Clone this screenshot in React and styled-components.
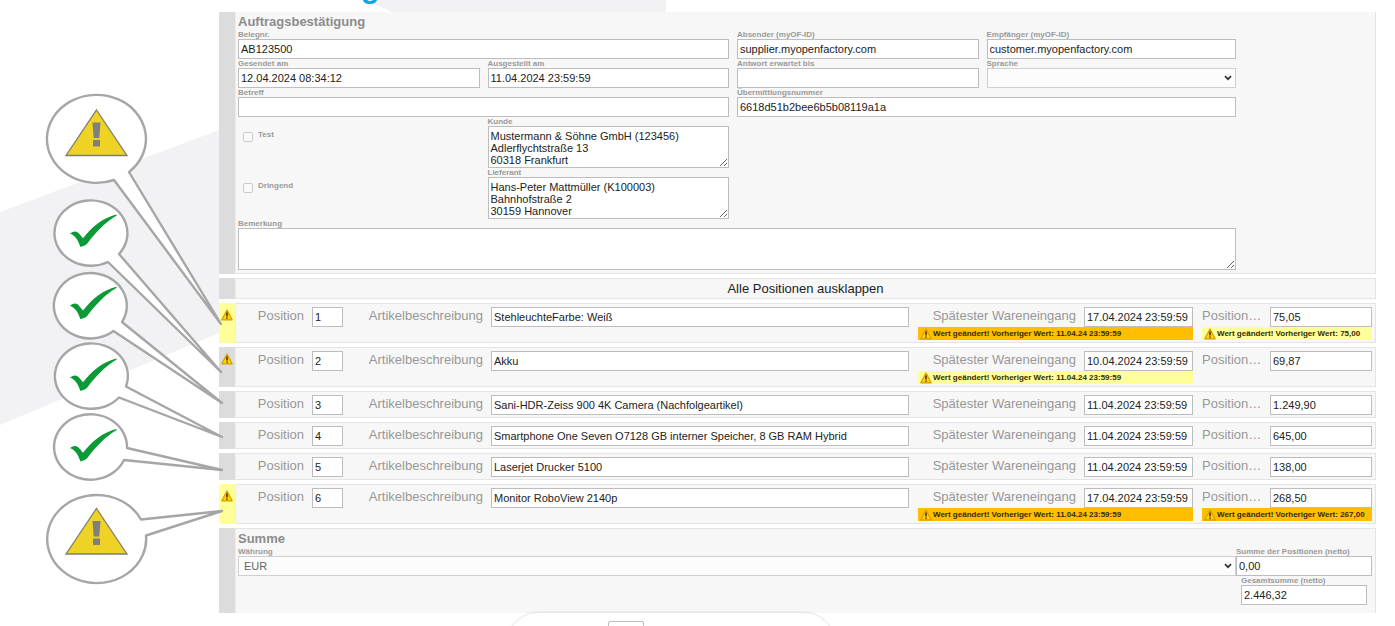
import React, { useId } from 'react'
import styled, { createGlobalStyle } from 'styled-components'

const GlobalStyle = createGlobalStyle`
	body {
		margin: 0;
		background: #fff;
		font-family: 'Liberation Sans', Arial, sans-serif;
	}

	* {
		box-sizing: border-box;
	}
`

const Page = styled.div`
	position: relative;
	z-index: 0;
	height: 100vh;
	overflow: hidden;
`

const Backdrop = styled.svg`
	position: absolute;
	top: 0;
	left: 0;
	z-index: -1;
`

const Callouts = styled.svg`
	position: absolute;
	top: 0;
	left: 0;
	pointer-events: none;
`

const Header = styled.header`
	display: flex;
	align-items: flex-end;
	height: 12px;
	padding-left: 361px;
	overflow: hidden;
`

const Brand = styled.div`
	font-size: 30px;
	line-height: 28px;
	font-weight: bold;
	color: #0ea5e0;
	padding-bottom: 10px;
`

const Document = styled.main`
	display: flex;
	flex-direction: column;
	gap: 4px;
	margin: 0 19px 0 219px;
	background: #fff;
`

const Section = styled.section`
	display: flex;
`

const Strip = styled.div`
	flex: none;
	width: 17px;
	padding: 6px 0 0 2px;
	line-height: 0;
	background: ${props => props.$changed ? '#ffff99' : '#dcdcdc'};
	border-right: 1px solid #ececec;
`

const Body = styled.div`
	flex: 1;
	min-width: 0;
	background: #f7f7f7;
	border: 1px solid #e4e4e4;
	border-left: 0;
`

const HeadBody = styled(Body)`
	border-top: 0;
	padding: 0 139px 3px 2px;
`

const SumBody = styled(Body)`
	border-bottom: 0;
	padding: 0 3px 8px 2px;
`

const Title = styled.h2`
	margin: 0;
	padding-top: 2px;
	font-size: 13px;
	line-height: 16px;
	color: #8c8c8c;
`

const Grid = styled.div`
	display: grid;
	grid-template-columns: repeat(4, 1fr);
`

const SumGrid = styled.div`
	display: grid;
	grid-template-columns: 1fr 136px;
`

const Cell = styled.div`
	display: flex;
	flex-direction: column;
	grid-column: ${props => props.$start || 'auto'} / span ${props => props.$span || 1};
	padding-right: ${props => props.$last ? 0 : 8}px;
`

const TotalCell = styled(Cell)`
	padding: 0 5px;
`

const SmallLabel = styled.label`
	font-size: 8px;
	line-height: 9px;
	font-weight: bold;
	color: #9a9a9a;
	white-space: nowrap;
`

const Input = styled.input`
	display: block;
	width: 100%;
	height: 20px;
	padding: 0 2px;
	border: 1px solid #bdbdbd;
	border-radius: 0;
	background: #fff;
	color: #222;
	font-family: inherit;
	font-size: 11px;
	outline: none;
`

const Area = styled.textarea`
	display: block;
	width: 100%;
	height: 42px;
	padding: 3px 2px 0;
	border: 1px solid #bdbdbd;
	background: #fff;
	color: #222;
	font-family: inherit;
	font-size: 11px;
	line-height: 12px;
	overflow: hidden;
	outline: none;
`

const SelectBox = styled.div`
	display: grid;
	align-items: center;

	> * {
		grid-area: 1 / 1;
	}

	> svg {
		justify-self: end;
		margin-right: 4px;
		pointer-events: none;
	}
`

const Select = styled.select`
	appearance: none;
	width: 100%;
	height: 20px;
	padding: 0 5px;
	border: 1px solid #cfcfcf;
	border-radius: 0;
	background: #fcfcfc;
	color: #666;
	font-family: inherit;
	font-size: 11px;
`

const CheckCell = styled.div`
	display: flex;
	align-items: flex-start;
	gap: 5px;
	padding: 13px 0 0 5px;
`

const Checkbox = styled.input`
	appearance: none;
	width: 10px;
	height: 10px;
	margin: 2px 0 0;
	border: 1px solid #ccc;
	border-radius: 2px;
	background: #fafafa;
`

const ExpandButton = styled.button`
	display: block;
	width: 100%;
	height: 19px;
	padding: 0;
	border: 0;
	background: none;
	color: #222;
	font-family: inherit;
	font-size: 13px;
	line-height: 19px;
`

const PositionBody = styled(Body)`
	display: grid;
	grid-template-columns: 105px 1fr 275px 170px;
	column-gap: 9px;
	padding: 3px 3px 2px 2px;
`

const Line = styled.div`
	display: flex;
	gap: 8px;
`

const LineLabel = styled.label`
	flex: ${props => props.$width ? 'none' : 1};
	width: ${props => props.$width ? props.$width + 'px' : 'auto'};
	font-size: 13px;
	line-height: 18px;
	text-align: ${props => props.$left ? 'left' : 'right'};
	white-space: nowrap;
	color: #979797;
`

const LineInput = styled(Input)`
	flex: ${props => props.$width ? 'none' : 1};
	width: ${props => props.$width ? props.$width + 'px' : 'auto'};
	min-width: 0;
`

const Notice = styled.div`
	display: flex;
	align-items: center;
	gap: 1px;
	height: 13px;
	padding-left: 2px;
	background: ${props => props.$level === 'high' ? '#ffbf00' : '#ffff99'};
	color: #332b00;
	font-size: 8px;
	font-weight: bold;
	white-space: nowrap;
`

const Footer = styled.footer`
	display: flex;
	justify-content: center;
	padding-right: 54px;
`

const Pager = styled.div`
	width: 326px;
	height: 60px;
	padding: 8px 0 0 100px;
	border-radius: 30px;
	background: #fff;
	box-shadow: 0 0 3px rgba(0, 0, 0, 0.2);
`

const PagerInput = styled(Input)`
	width: 36px;
	height: 24px;
	border-radius: 2px;
`

const positions = [
	{ nr: 1, text: 'StehleuchteFarbe: Weiß', date: '17.04.2024 23:59:59', price: '75,05', warn: true, changed: true, dateNote: { level: 'high', old: '11.04.24 23:59:59' }, priceNote: { level: 'low', old: '75,00' } },
	{ nr: 2, text: 'Akku', date: '10.04.2024 23:59:59', price: '69,87', warn: true, dateNote: { level: 'low', old: '11.04.24 23:59:59' } },
	{ nr: 3, text: 'Sani-HDR-Zeiss 900 4K Camera (Nachfolgeartikel)', date: '11.04.2024 23:59:59', price: '1.249,90' },
	{ nr: 4, text: 'Smartphone One Seven O7128 GB interner Speicher, 8 GB RAM Hybrid', date: '11.04.2024 23:59:59', price: '645,00' },
	{ nr: 5, text: 'Laserjet Drucker 5100', date: '11.04.2024 23:59:59', price: '138,00' },
	{ nr: 6, text: 'Monitor RoboView 2140p', date: '17.04.2024 23:59:59', price: '268,50', warn: true, changed: true, dateNote: { level: 'high', old: '11.04.24 23:59:59' }, priceNote: { level: 'high', old: '267,00' } },
]

const bubbles = [
	{ type: 'warn', y: 139, d: 'M114 180 A49.5 44 0 1 1 129 172 L221 324 Z' },
	{ type: 'ok', y: 233.5, d: 'M108 262 A36.5 32.7 0 1 1 119 254 L221 372 Z' },
	{ type: 'ok', y: 305.7, d: 'M113.5 331 A36.5 32.7 0 1 1 122 322 L222 403 Z' },
	{ type: 'ok', y: 377.5, d: 'M119 397.5 A36.5 32.7 0 1 1 126 386.5 L222 437 Z' },
	{ type: 'ok', y: 448, d: 'M124 460 A36.5 32.7 0 1 1 127 448 L222 470 Z' },
	{ type: 'warn', y: 537.5, d: 'M146 535.5 A49.5 44 0 1 1 141 519.5 L222 511 Z' },
]

const WarnIcon = () => (
	<svg width="12" height="12" viewBox="0 0 12 12">
		<path d="M6 1 L11.2 10.8 H0.8 Z" fill="#ffd800" stroke="#d99a00" strokeWidth="1.2" strokeLinejoin="round" />
		<path d="M6 3.6 V7.6 M6 8.4 V9.8" stroke="#5a2800" strokeWidth="1.6" />
	</svg>
)

const Chevron = () => (
	<svg width="8" height="6" viewBox="0 0 8 6">
		<path d="M1 1.2 L4 4.2 L7 1.2" fill="none" stroke="#333" strokeWidth="1.7" />
	</svg>
)

const Field = ({ label, value, area, select, cell: CellType = Cell, ...cell }) => {
	const id = useId()
	return (
		<CellType {...cell}>
			<SmallLabel htmlFor={id}>{label}</SmallLabel>
			{area && <Area id={id} defaultValue={value} />}
			{select && (
				<SelectBox>
					<Select id={id} defaultValue={value}>
						<option value={value}>{value}</option>
					</Select>
					<Chevron />
				</SelectBox>
			)}
			{!area && !select && <Input id={id} defaultValue={value} />}
		</CellType>
	)
}

const Check = ({ label }) => {
	const id = useId()
	return (
		<CheckCell>
			<Checkbox id={id} type="checkbox" />
			<SmallLabel htmlFor={id}>{label}</SmallLabel>
		</CheckCell>
	)
}

const LineField = ({ label, value, labelWidth, inputWidth, left, note }) => {
	const id = useId()
	return (
		<div>
			<Line>
				<LineLabel htmlFor={id} $width={labelWidth} $left={left}>{label}</LineLabel>
				<LineInput id={id} defaultValue={value} $width={inputWidth} />
			</Line>
			{note && (
				<Notice $level={note.level}>
					<WarnIcon />
					Wert geändert! Vorheriger Wert: {note.old}
				</Notice>
			)}
		</div>
	)
}

const Position = ({ item }) => (
	<Section>
		<Strip $changed={item.changed}>{item.warn && <WarnIcon />}</Strip>
		<PositionBody>
			<LineField label="Position" value={item.nr} inputWidth={31} />
			<LineField label="Artikelbeschreibung" value={item.text} labelWidth={131} />
			<LineField label="Spätester Wareneingang" value={item.date} inputWidth={109} note={item.dateNote} />
			<LineField label="Position…" value={item.price} inputWidth={102} left note={item.priceNote} />
		</PositionBody>
	</Section>
)

const Bubble = ({ type, y, d }) => (
	<g>
		<path d={d} fill="#fff" stroke="#a6a6a6" strokeWidth="2.4" strokeLinejoin="round" />
		{type === 'warn' ? (
			<g transform={`translate(96.5 ${y})`}>
				<path d="M0 -29 L30.5 16.5 H-30.5 Z" fill="#efd226" stroke="#7f7f6e" strokeWidth="1.3" />
				<path d="M-4 -16.5 H4 L2.8 -1 H-2.8 Z M-3.5 1 H3.5 V7.5 H-3.5 Z" fill="#7f7f7f" />
			</g>
		) : (
			<path
				transform={`translate(90.5 ${y})`}
				d="M-20.5 0 C-17 -3 -13.5 -2.6 -11.5 0 L-7.5 4.8 C1 -6.5 13 -16 25.8 -19 L26.3 -18 C14 -11 4 0.5 -2 8.5 C-4.5 12 -7 12.6 -10 13.5 C-12.5 7 -14.5 2.5 -20.5 0 Z"
				fill="#0b9a36"
			/>
		)}
	</g>
)

const App = () => (
	<Page>
		<GlobalStyle />
		<Backdrop width="670" height="430">
			<path d="M0 212 L219 130 V333 L0 425 Z" fill="#f2f2f4" />
			<path d="M364 0 H666 V12 H392 Z" fill="#f2f2f4" />
		</Backdrop>
		<Header>
			<Brand>g</Brand>
		</Header>
		<Document>
			<Section>
				<Strip />
				<HeadBody>
					<Title>Auftragsbestätigung</Title>
					<Grid>
						<Field label="Belegnr." value="AB123500" $span={2} />
						<Field label="Absender (myOF-ID)" value="supplier.myopenfactory.com" />
						<Field label="Empfänger (myOF-ID)" value="customer.myopenfactory.com" $last />
						<Field label="Gesendet am" value="12.04.2024 08:34:12" />
						<Field label="Ausgestellt am" value="11.04.2024 23:59:59" />
						<Field label="Antwort erwartet bis" value="" />
						<Field label="Sprache" value="" select $last />
						<Field label="Betreff" value="" $span={2} />
						<Field label="Übermittlungsnummer" value="6618d51b2bee6b5b08119a1a" $span={2} $last />
						<Check label="Test" />
						<Field label="Kunde" value={'Mustermann & Söhne GmbH (123456)\nAdlerflychtstraße 13\n60318 Frankfurt'} area />
						<Cell $span={2} />
						<Check label="Dringend" />
						<Field label="Lieferant" value={'Hans-Peter Mattmüller (K100003)\nBahnhofstraße 2\n30159 Hannover'} area />
						<Cell $span={2} />
						<Field label="Bemerkung" value="" area $span={4} $last />
					</Grid>
				</HeadBody>
			</Section>
			<Section>
				<Strip />
				<Body>
					<ExpandButton>Alle Positionen ausklappen</ExpandButton>
				</Body>
			</Section>
			{positions.map(item => <Position key={item.nr} item={item} />)}
			<Section>
				<Strip />
				<SumBody>
					<Title>Summe</Title>
					<SumGrid>
						<Field label="Währung" value="EUR" select $last />
						<Field label="Summe der Positionen (netto)" value="0,00" $last />
						<Field label="Gesamtsumme (netto)" value="2.446,32" cell={TotalCell} $start={2} />
					</SumGrid>
				</SumBody>
			</Section>
		</Document>
		<Footer>
			<Pager>
				<PagerInput aria-label="Seite" />
			</Pager>
		</Footer>
		<Callouts width="226" height="600">
			{bubbles.map(bubble => <Bubble key={bubble.y} {...bubble} />)}
		</Callouts>
	</Page>
)

export default App
